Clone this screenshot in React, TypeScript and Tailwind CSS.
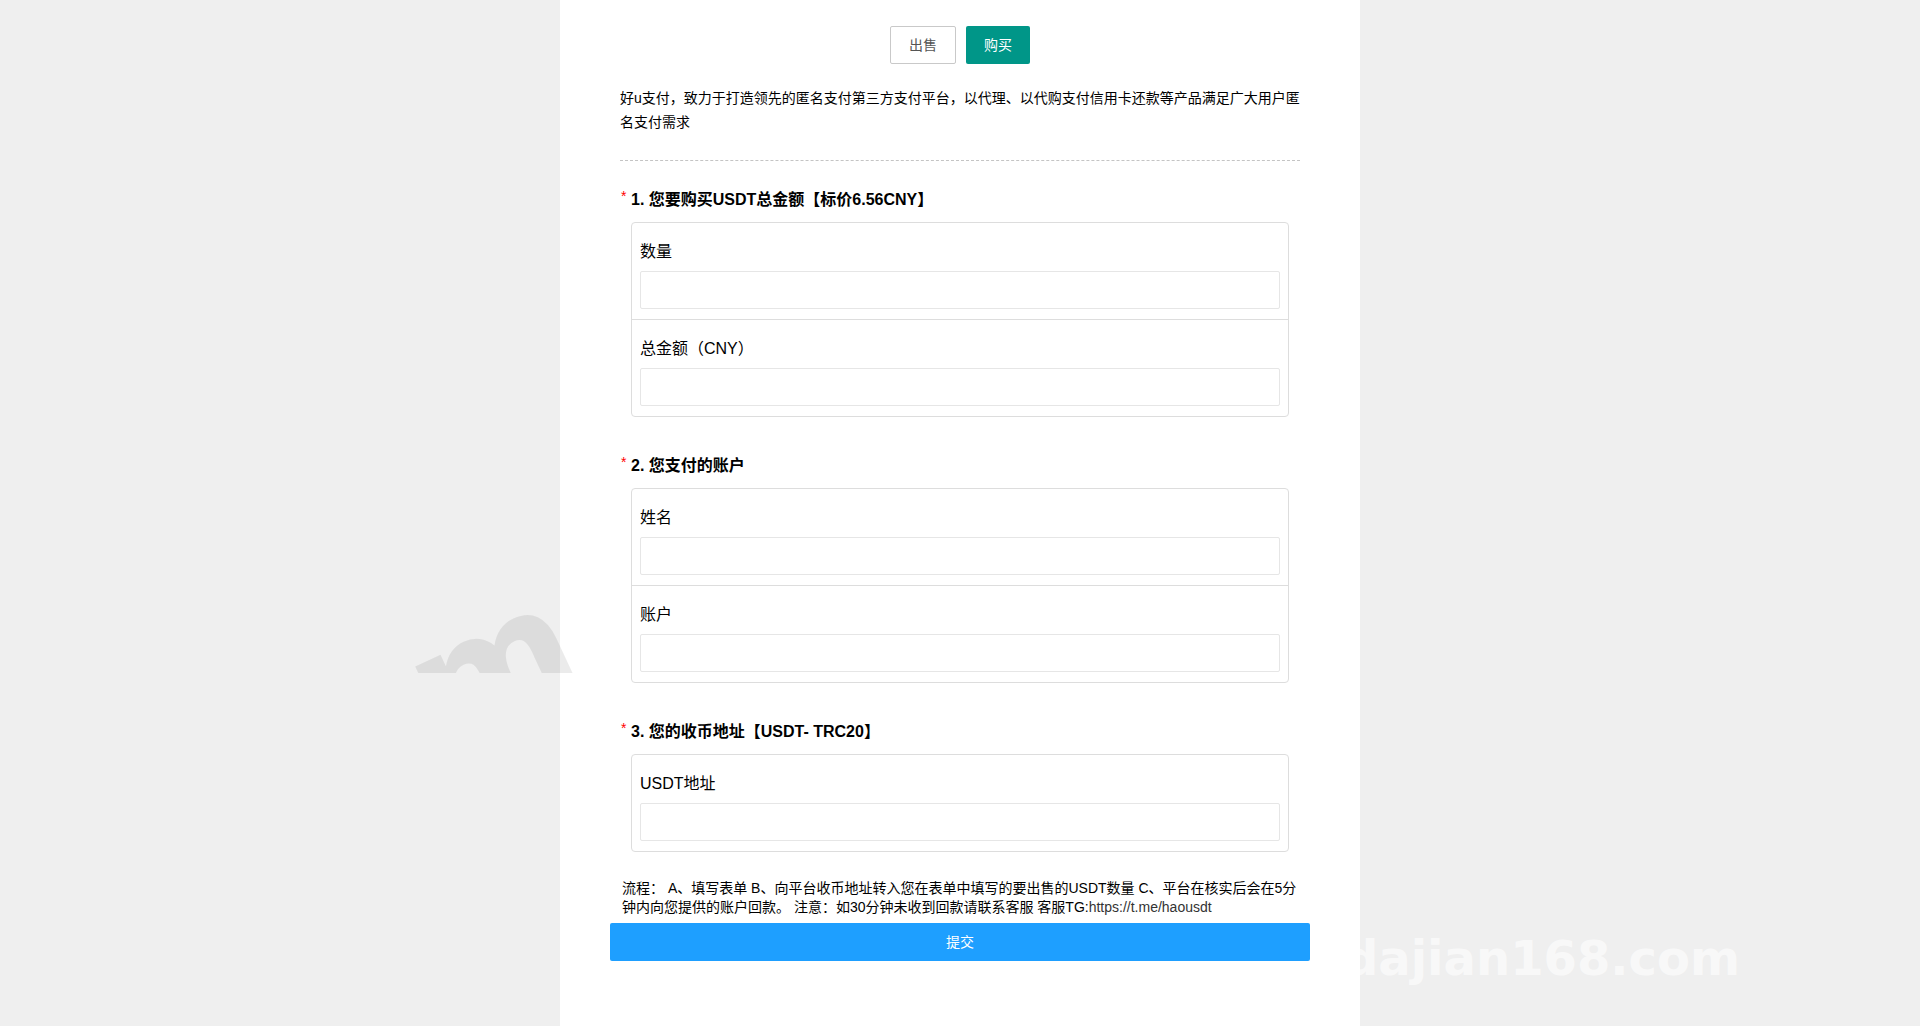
import React from 'react';

interface Question {
  title: string;
  fields: { id: string; label: string }[];
}

const questions: Question[] = [
  {
    title: '1. 您要购买USDT总金额【标价6.56CNY】',
    fields: [
      { id: 'amount', label: '数量' },
      { id: 'total', label: '总金额（CNY）' },
    ],
  },
  {
    title: '2. 您支付的账户',
    fields: [
      { id: 'name', label: '姓名' },
      { id: 'account', label: '账户' },
    ],
  },
  {
    title: '3. 您的收币地址【USDT- TRC20】',
    fields: [{ id: 'address', label: 'USDT地址' }],
  },
];

const QuestionBlock: React.FC<{ question: Question }> = ({ question }) => (
  <fieldset>
    <legend className="flex h-6 items-start text-base leading-6 font-bold">
      <span className="w-[11px] pl-[1px] text-sm leading-4 font-normal text-[#ff0000]">*</span>
      {question.title}
    </legend>
    <div className="mx-[11px] mt-[10px] divide-y divide-[#dddddd] rounded border border-[#dddddd]">
      {question.fields.map((field) => (
        <div key={field.id} className="px-2 pt-4 pb-[10px]">
          <label htmlFor={field.id} className="block text-base leading-[26px]">
            {field.label}
          </label>
          <input
            id={field.id}
            type="text"
            className="mt-[6px] block h-[38px] w-full rounded-xs border border-[#e6e6e6] bg-white px-2 text-sm"
          />
        </div>
      ))}
    </div>
  </fieldset>
);

const Watermark: React.FC = () => (
  <>
    <svg
      className="pointer-events-none absolute top-[600px] -left-40 h-[73px] w-[200px] overflow-hidden"
      aria-hidden="true"
    >
      <text
        x="40"
        y="151"
        transform="rotate(-25 40 151)"
        className="fill-black/8 font-['DejaVu_Sans',sans-serif] text-[159px] font-bold"
      >
        m
      </text>
    </svg>
    <span className="pointer-events-none absolute top-[930px] -right-[380px] font-['DejaVu_Sans',sans-serif] text-5xl leading-[56px] font-bold text-white/60">
      dajian168.com
    </span>
  </>
);

const App: React.FC = () => {
  return (
    <div className="min-h-screen overflow-x-hidden bg-[#efefef] font-['Liberation_Sans','Noto_Sans_CJK_SC',sans-serif] text-black">
      <main className="relative mx-auto min-h-screen max-w-[800px] bg-white px-[50px] pt-[26px]">
        {/* Tipo de operación */}
        <div className="flex justify-center gap-[10px]">
          <button className="h-[38px] rounded-xs border border-[#c9c9c9] bg-white px-[18px] text-sm text-[#555555]">
            出售
          </button>
          <button className="h-[38px] rounded-xs bg-[#009688] px-[18px] text-sm text-white">
            购买
          </button>
        </div>

        <form>
          <div className="px-[10px]">
            <p className="mt-[22px] border-b border-dashed border-[#c4c4c4] pb-[26px] text-sm leading-6">
              好u支付，致力于打造领先的匿名支付第三方支付平台，以代理、以代购支付信用卡还款等产品满足广大用户匿名支付需求
            </p>

            <div className="flex flex-col gap-[37px] pt-[27px]">
              {questions.map((question) => (
                <QuestionBlock key={question.title} question={question} />
              ))}
            </div>
          </div>

          <p className="mt-[27px] px-3 pb-[6px] text-sm leading-[19px]">
            流程： A、填写表单 B、向平台收币地址转入您在表单中填写的要出售的USDT数量 C、平台在核实后会在5分钟内向您提供的账户回款。 注意：如30分钟未收到回款请联系客服 客服TG:
            <a href="https://t.me/haousdt" className="text-[#333333]">
              https://t.me/haousdt
            </a>
          </p>
          <button
            type="submit"
            className="h-[38px] w-full rounded-xs bg-[#1e9fff] text-sm text-white"
          >
            提交
          </button>
        </form>

        <Watermark />
      </main>
    </div>
  );
};

export default App;
